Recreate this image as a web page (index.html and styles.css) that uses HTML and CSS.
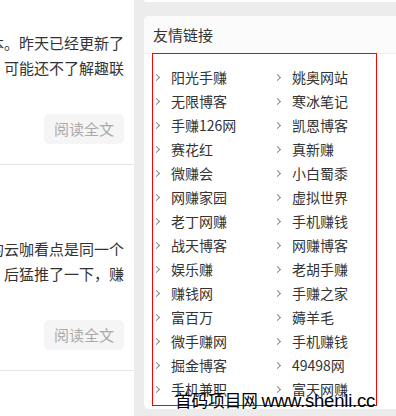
FILE: index.html
```html
<!DOCTYPE html>
<html lang="zh-CN">
<head>
<meta charset="utf-8">
<link rel="stylesheet" href="styles.css">
</head>
<body>
<div class="page">
  <div class="main">
    <article class="post first">
      <p class="excerpt"><span class="line"><span>新版本。昨天已经更新了</span></span><span class="line"><span>可能还不了解趣联</span></span></p>
      <div class="more-row"><a class="more">阅读全文</a></div>
    </article>
    <article class="post second">
      <p class="excerpt"><span class="line"><span>它的云咖看点是同一个</span></span><span class="line"><span>后猛推了一下，赚</span></span></p>
      <div class="more-row"><a class="more">阅读全文</a></div>
    </article>
  </div>
  <aside class="side">
    <div class="prev-card"></div>
    <section class="card">
      <h3 class="card-title">友情链接</h3>
      <ul class="links">
        <li><i class="chev"></i>阳光手赚</li><li><i class="chev"></i>姚奥网站</li>
        <li><i class="chev"></i>无限博客</li><li><i class="chev"></i>寒冰笔记</li>
        <li><i class="chev"></i>手赚126网</li><li><i class="chev"></i>凯恩博客</li>
        <li><i class="chev"></i>赛花红</li><li><i class="chev"></i>真新赚</li>
        <li><i class="chev"></i>微赚会</li><li><i class="chev"></i>小白蜀黍</li>
        <li><i class="chev"></i>网赚家园</li><li><i class="chev"></i>虚拟世界</li>
        <li><i class="chev"></i>老丁网赚</li><li><i class="chev"></i>手机赚钱</li>
        <li><i class="chev"></i>战天博客</li><li><i class="chev"></i>网赚博客</li>
        <li><i class="chev"></i>娱乐赚</li><li><i class="chev"></i>老胡手赚</li>
        <li><i class="chev"></i>赚钱网</li><li><i class="chev"></i>手赚之家</li>
        <li><i class="chev"></i>富百万</li><li><i class="chev"></i>薅羊毛</li>
        <li><i class="chev"></i>微手赚网</li><li><i class="chev"></i>手机赚钱</li>
        <li><i class="chev"></i>掘金博客</li><li><i class="chev"></i>49498网</li>
        <li><i class="chev"></i>手机兼职</li><li><i class="chev"></i>富天网赚</li>
      </ul>
    </section>
  </aside>
</div>
<div class="watermark"><span class="wm-cn">首码项目网</span> <span class="wm-en">www.shenli.cc</span></div>
</body>
</html>
```
FILE: styles.css
```css
html, body {
  margin: 0;
  padding: 0;
}
body {
  width: 396px;
  height: 416px;
  overflow: hidden;
  background: #ececec;
  font-family: "Noto Sans CJK SC", "Microsoft YaHei", sans-serif;
  color: #333;
  position: relative;
}
.page {
  display: flex;
  gap: 10px;
  height: 416px;
}
.main {
  width: 134px;
  flex: none;
  background: #fff;
  overflow: hidden;
}
.post {
  border-bottom: 1px solid #e6e6e6;
  padding: 0 10px 20px 0;
}
.post.first { padding-top: 30px; }
.post.second { padding-top: 71px; }
.excerpt {
  margin: 0;
  font-size: 15px;
  line-height: 25px;
  color: #333;
}
.line {
  display: flex;
  justify-content: flex-end;
  white-space: nowrap;
}
.line > span {
  flex: none;
}
.more-row {
  display: flex;
  justify-content: flex-end;
  margin-top: 34px;
}
.more {
  width: 80px;
  height: 30px;
  line-height: 30px;
  text-align: center;
  background: #f5f5f5;
  border-radius: 5px;
  font-size: 15px;
  color: #aaa;
}
.side {
  width: 262px;
  flex: none;
  display: flex;
  flex-direction: column;
}
.prev-card {
  height: 2px;
  background: #fff;
  border-radius: 0 0 4px 4px;
}
.card {
  margin-top: 14px;
  height: 393px;
  background: #fff;
  border-radius: 5px;
  box-sizing: border-box;
  padding-bottom: 3px;
}
.card-title {
  margin: 0;
  height: 37px;
  line-height: 37px;
  padding-left: 9px;
  font-size: 15px;
  font-weight: normal;
  color: #333;
  background: #fbfbfb;
  border-bottom: 1px solid #eee;
  border-radius: 5px 5px 0 0;
}
.links {
  list-style: none;
  margin: -1px 0 0 8px;
  width: 225px;
  height: 353px;
  box-sizing: border-box;
  border: 1px solid #f00;
  padding: 11px 0 4px 0;
  display: grid;
  grid-template-columns: 121px 121px;
  grid-auto-rows: 24px;
}
.links li {
  display: flex;
  align-items: center;
  font-size: 14px;
  line-height: 24px;
  color: #333;
  white-space: nowrap;
}
.chev {
  width: 4px;
  height: 4px;
  border-top: 1.5px solid #8a8a8a;
  border-right: 1.5px solid #8a8a8a;
  transform: rotate(45deg);
  margin: 0 12px 0 1px;
  flex: none;
}
.watermark {
  position: absolute;
  left: 175px;
  top: 392px;
  line-height: 1;
  color: #000;
  white-space: nowrap;
}
.wm-cn {
  font-family: "Noto Sans CJK SC", sans-serif;
  font-size: 16.6px;
}
.wm-en {
  font-family: "Liberation Sans", sans-serif;
  font-size: 18.5px;
  letter-spacing: -0.2px;
}
```
